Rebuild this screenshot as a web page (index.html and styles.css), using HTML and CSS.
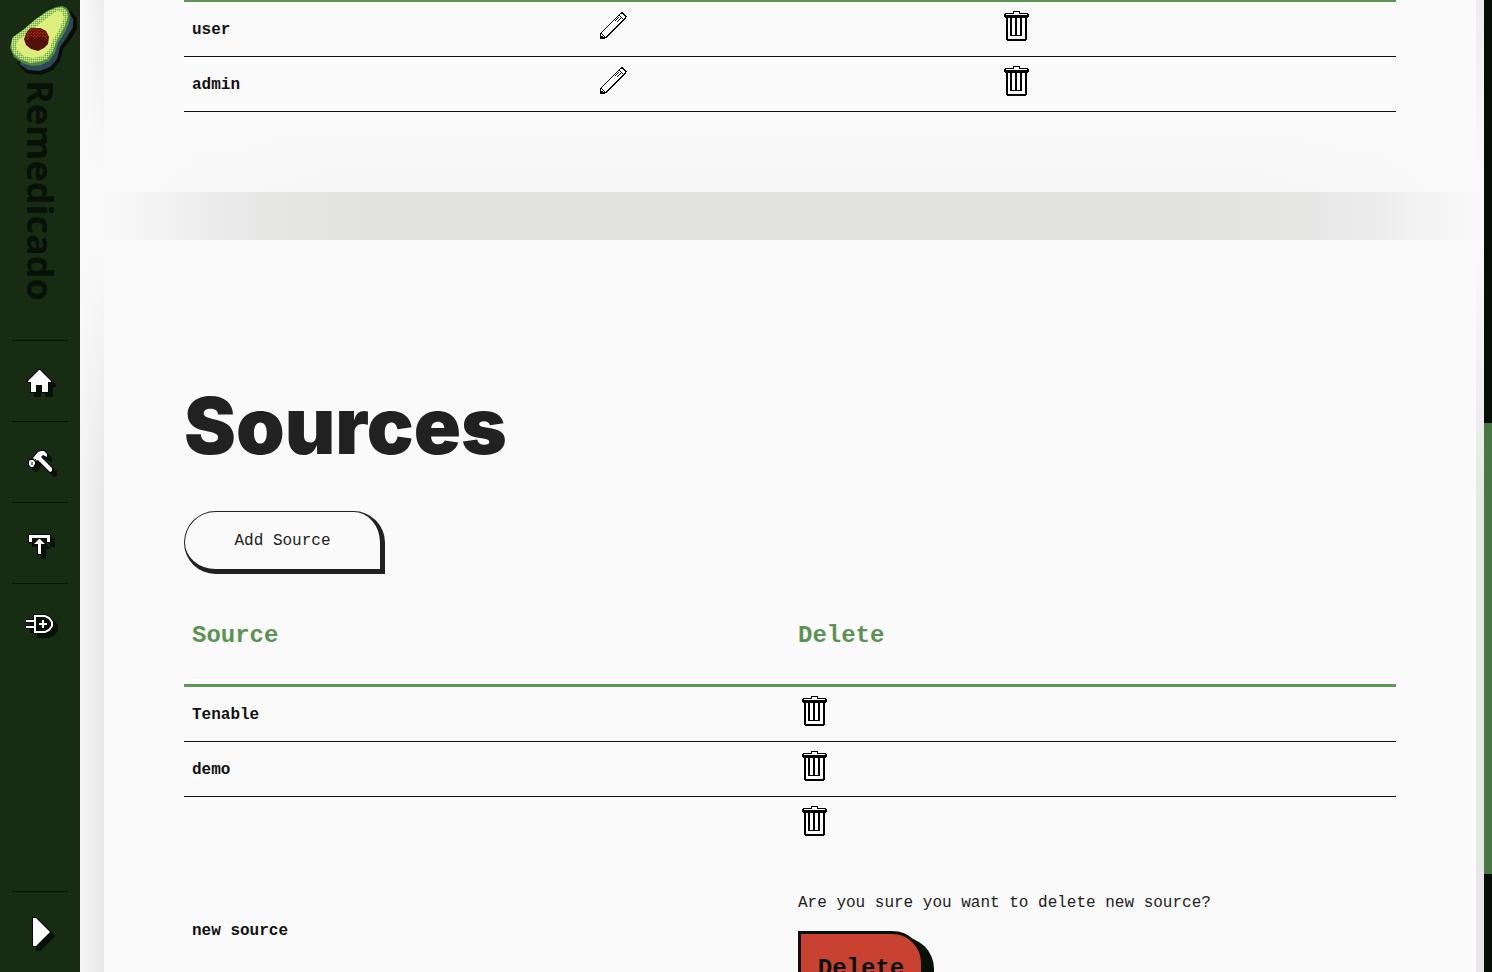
FILE: index.html
```html
<!DOCTYPE html>
<html lang="en">
<head>
<meta charset="utf-8">
<title>Remedicado</title>
<link rel="stylesheet" href="styles.css">
</head>
<body>
<svg class="symbols" aria-hidden="true">
  <symbol id="trash" viewBox="0 0 32 32">
    <path fill="#000" d="M13 1h7v2h8v1h1v3h-1v1h-1v22h-1v1H7v-1H6V8H5V7H4V4h1V3h8z"/>
    <path fill="#fff" d="M14 2h5v2h8v1H6V4h8zM8 8h17v21H8z"/>
    <path fill="#000" d="M10 8h2v18h-2zM15 8h2v18h-2zM20 8h2v18h-2zM10 25h12v1H10z"/>
  </symbol>
  <symbol id="pencil" viewBox="0 0 32 32">
    <path fill="#fff" stroke="#000" stroke-width="1.4" d="M4.500 28.500v-5L24.500 3.500l2-1 3.500 4-1 2L10 27.500l-4 1z"/>
    <path fill="none" stroke="#000" stroke-width="1.400" d="M5 23l5 5M23 5l5 5M19 11l4-4M21 12l4-4"/>
    <path fill="#000" d="M4 26h3l2 3H4z"/>
  </symbol>
</svg>
<div class="app">
  <nav class="sidebar">
    <a class="brand" href="#home">
      <svg class="logo" viewBox="0 0 80 80" aria-hidden="true">
        <defs>
          <pattern id="dither" width="2" height="2" patternUnits="userSpaceOnUse">
            <rect width="2" height="2" fill="#a5cf67"/><rect width="1" height="1" fill="#d9ed7c"/><rect x="1" y="1" width="1" height="1" fill="#6fa84f"/>
          </pattern>
          <pattern id="speckle" width="3" height="3" patternUnits="userSpaceOnUse">
            <rect width="3" height="3" fill="#6b170d"/><rect width="1" height="1" fill="#a52c17"/><rect x="1" y="2" width="1" height="1" fill="#a52c17"/>
          </pattern>
        </defs>
        <path fill="#060f06" d="M70 10l7 8v11l-6 10-8 10-3 12-7 9-12 5-15-2-9-10 30-20z"/>
        <path fill="#30495a" d="M68 11l5 8v8l-6 10-7 10-3 12-7 8-10 4-12-1-9-6 25-20z"/>
        <path fill="#4c8a43" d="M56 7l6-1 5 2 3 6-1 9-4 9-7 11-3 10-6 8-8 4-9 1-10-3-8-6-4-9 2-10 11-8 12-10 12-9z"/>
        <path fill="url(#dither)" d="M56 8l6-1 5 4 1 6-4 11-7 12-4 11-6 8-8 3-9 1-10-4-7-6-2-8 2-8 10-7 13-11 12-8z"/>
        <path fill="#dcef7c" d="M57 11l5 1 2 6-4 10-7 12-4 10-6 6-10 2-9-2-7-6-1-5 2-5 10-6 14-12 9-7z"/>
        <path fill="#54100a" d="M31 28h9l6 3 3 6-1 7-4 4-6 3-7-2-5-4-2-6 3-7z"/>
        <path fill="url(#speckle)" d="M31 28h9l6 3 2 5-1 4-6-4-6 3-4-3-3 4-3-1 2-7z"/>
      </svg>
      <span class="brand-name">Remedicado</span>
    </a>
    <a class="nav-item" href="#home" aria-label="Home"><svg class="nav-icon" viewBox="0 0 32 32"><path d="M15 5h1l11 11v1h-3v10h-6v-7h-6v7H7V17H4v-1z"/></svg></a>
    <a class="nav-item" href="#tools" aria-label="Tools"><svg class="nav-icon" viewBox="0 0 32 32"><path d="M9 12l5-6 3-1h3l3 3v3l-4-2-2 2 11 11v3l-2 1L14 14l-2 1zM6 14h3l2 2v2l-2 3H7l-2-2v-4z"/><path class="dark-line" d="M8 16v3M11 13l2 3"/></svg></a>
    <a class="nav-item" href="#upload" aria-label="Upload"><svg class="nav-icon" viewBox="0 0 32 32"><path d="M5 8h21v7h-3v-4H8v4H5z"/><path d="M15 12h1l5 5h-4v10h-3V17h-4z"/></svg></a>
    <a class="nav-item" href="#sources" aria-label="Integrations"><svg class="nav-icon" viewBox="0 0 32 32"><path class="plug-outline" d="M11 8h10l4 2 3 4v4l-3 4-4 2H11zM2 13h8M2 19h8"/><path class="plug-core" d="M11 8h10l4 2 3 4v4l-3 4-4 2H11z"/><path class="light-line" d="M2 13h8M2 19h8M19 12v8M15 16h8"/></svg></a>
    <a class="nav-item nav-expand" href="#menu" aria-label="Expand menu"><svg class="nav-icon" viewBox="0 0 32 32"><path d="M9 2h3l14 14-14 14H9z"/></svg></a>
  </nav>
  <main class="content">
    <div class="panel panel-users">
      <section class="card card-users">
        <table class="list list-users">
          <tbody>
            <tr><td class="name">user</td><td><button class="icon-button" aria-label="Edit user"><svg class="icon"><use href="#pencil"/></svg></button></td><td><button class="icon-button" aria-label="Delete user"><svg class="icon"><use href="#trash"/></svg></button></td></tr>
            <tr><td class="name">admin</td><td><button class="icon-button" aria-label="Edit admin"><svg class="icon"><use href="#pencil"/></svg></button></td><td><button class="icon-button" aria-label="Delete admin"><svg class="icon"><use href="#trash"/></svg></button></td></tr>
          </tbody>
        </table>
      </section>
    </div>
    <div class="gap"></div>
    <div class="panel panel-sources">
      <section class="card">
        <h1 class="title">Sources</h1>
        <button class="add-button">Add Source</button>
        <table class="list">
          <thead><tr><th>Source</th><th>Delete</th></tr></thead>
          <tbody>
            <tr><td class="name">Tenable</td><td><button class="icon-button" aria-label="Delete Tenable"><svg class="icon"><use href="#trash"/></svg></button></td></tr>
            <tr><td class="name">demo</td><td><button class="icon-button" aria-label="Delete demo"><svg class="icon"><use href="#trash"/></svg></button></td></tr>
            <tr><td class="name">new source</td><td><button class="icon-button" aria-label="Delete new source"><svg class="icon"><use href="#trash"/></svg></button>
              <form class="confirm"><p class="question">Are you sure you want to delete new source?</p><button class="delete-button" type="button">Delete</button></form></td></tr>
          </tbody>
        </table>
      </section>
    </div>
  </main>
  <div class="track"><div class="thumb"></div></div>
</div>
</body>
</html>
```
FILE: styles.css
```css
* { box-sizing: border-box; }
body {
  margin: 0;
  background: #fafafa;
  color: #212121;
  font: 16px/24px "Liberation Mono", monospace;
}
.symbols { display: none; }
.app {
  display: grid;
  grid-template-columns: 80px 1fr 8px;
  height: 100vh;
  overflow: hidden;
}
.sidebar {
  display: flex;
  flex-direction: column;
  height: 100vh;
  padding: 0 12px;
  background: #182c14;
}
.brand {
  display: flex;
  flex-direction: column;
  align-items: center;
  height: 340px;
  color: #081108;
  text-decoration: none;
}
.logo { width: 80px; height: 80px; flex: none; }
.brand-name {
  writing-mode: vertical-rl;
  font: 700 36px/48px "Open Sans", sans-serif;
}
.nav-item {
  display: flex;
  align-items: center;
  justify-content: center;
  height: 81px;
  border-top: 1px solid #081108;
}
.nav-expand { margin-top: auto; }
.nav-icon {
  width: 32px;
  height: 32px;
  overflow: visible;
  fill: #fff;
  stroke: #050b05;
  stroke-width: 2px;
  paint-order: stroke;
  filter: drop-shadow(4px 4px 0 #081108);
}
.nav-icon .dark-line { fill: none; stroke-width: 1px; }
.nav-icon .light-line { fill: none; stroke: #fff; }
.nav-icon .plug-outline { stroke-width: 4px; }
.nav-icon .plug-core { fill: #081108; stroke: #fff; paint-order: normal; }

.content { overflow: hidden; height: 100vh; }
.panel { padding: 0 8px 0 24px; }
.panel-users {
  background:
    linear-gradient(to bottom, transparent, #fafafa 180px),
    linear-gradient(to right, #fafafa, #ededed 24px, #ededed);
}
.panel-sources {
  background:
    linear-gradient(to bottom, #fafafa, transparent 260px),
    linear-gradient(to right, #f5f5f5, #e7e7e7 24px, #e7e7e7);
}
.gap {
  height: 48px;
  background:
    linear-gradient(to right, #fafafa 20px, #f3f3f3 80px, #ebebeb 140px, #e4e4e3 220px, #e2e2e1 300px, #e2e2e1 calc(100% - 300px), #e4e4e3 calc(100% - 220px), #ebebeb calc(100% - 120px), #f3f3f3 calc(100% - 60px), #fafafa);
}
.card { padding: 80px; background: #fafafa; }
.card-users {
  padding-top: 0;
  background:
    linear-gradient(to right, #fafafa, transparent 240px, transparent calc(100% - 240px), #fafafa),
    linear-gradient(to bottom, #fafafa 120px, #f6f6f6);
}
.title {
  margin: 58px 0 37px;
  font: 900 78px/96px Inter, sans-serif;
}
.add-button {
  display: block;
  min-width: 201px;
  height: 63px;
  padding: 0 48px;
  border: solid #212121;
  border-width: 1px 5px 5px 1px;
  border-radius: 32px 32px 0 32px;
  background: #fafafa;
  color: #212121;
  font: inherit;
}
.list {
  width: 100%;
  margin-top: 10px;
  border-spacing: 0;
  table-layout: fixed;
  color: #111;
}
.list-users { margin: 0; border-top: 2px solid #5f9856; }
.list th {
  padding: 34px 8px 30px;
  border-bottom: 3px solid #5f9856;
  color: #5a9352;
  font-size: 24px;
  line-height: 36px;
  text-align: left;
}
.list td { padding: 8px; border-bottom: 1px solid #111; }
.list .name { padding-top: 10px; font-weight: 700; }
.icon-button {
  display: block;
  margin: 0 0 6px;
  padding: 0;
  border: 0;
  background: none;
}
.icon { display: block; width: 32px; height: 32px; shape-rendering: crispEdges; }
.confirm { padding: 48px 0; }
.question { margin: 0 0 16px; color: #212121; }
.delete-button {
  height: 76px;
  min-width: 126px;
  padding: 0 16px;
  border: 3px solid #081108;
  border-radius: 0 32px 32px 32px;
  background: #c94130;
  box-shadow: 10px 6px 0 #081108;
  color: #081108;
  font: 700 24px/36px "Liberation Mono", monospace;
}
.track {
  display: grid;
  grid-template-rows: 423fr 451fr 98fr;
  background: #050f05;
}
.thumb { grid-row: 2; background: #487743; }
```
